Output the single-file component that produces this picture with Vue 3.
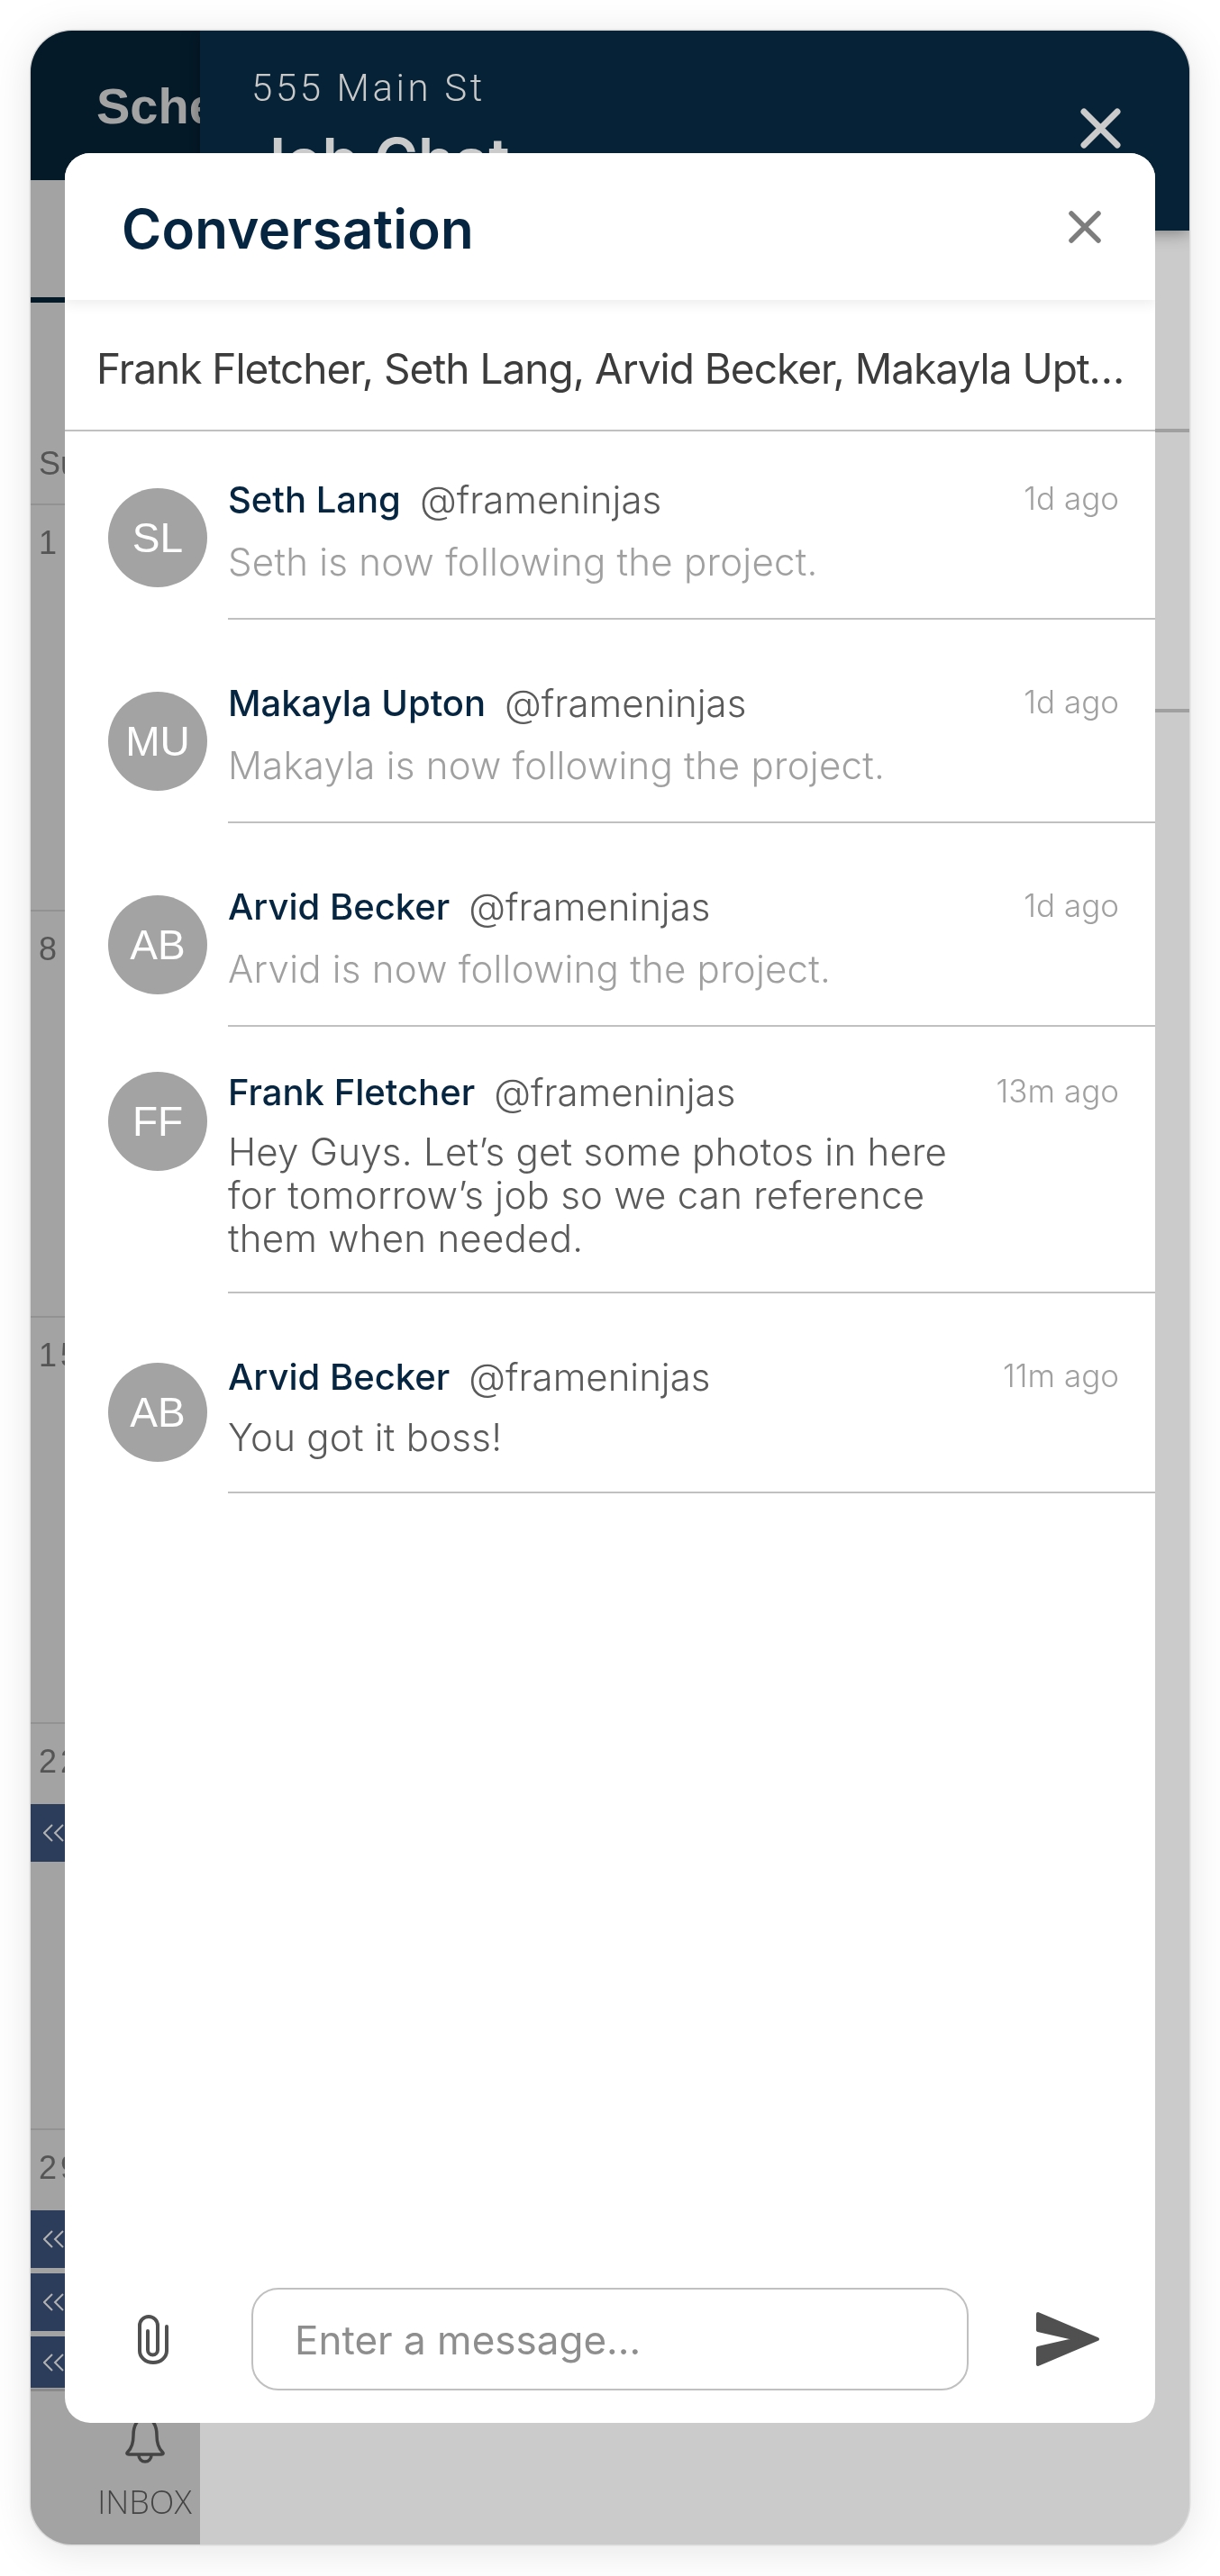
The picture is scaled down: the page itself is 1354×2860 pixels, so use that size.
<template>
  <div class="stage">
    <div class="frame">
      <aside class="sidebar">
        <div class="side-head">Schedule</div>
        <div class="side-tabs"></div>
        <div class="weekday">Su</div>
        <div v-for="day in days" :key="day.label" class="week" :class="{ lastWeek: day.chips === 3 }">
          <div class="day">{{ day.label }}</div>
          <div v-for="n in day.chips" :key="n" class="chip">
            <svg class="chev" viewBox="0 0 24 20" fill="none" stroke="#b2b2b2" stroke-width="2">
              <polyline points="10,1 1,10 10,19" />
              <polyline points="22,1 13,10 22,19" />
            </svg>
          </div>
        </div>
        <div class="side-foot">
          <svg class="bell" viewBox="0 0 44 56" fill="none" stroke="#444" stroke-width="3.5" stroke-linejoin="round">
            <path d="M22 3C12 6 9 15 9 24C9 33 7 38 3 42C1 44 2 45 4 45H40C42 45 43 44 41 42C37 38 35 33 35 24C35 15 32 6 22 3Z" />
            <path d="M15 46a7 7 0 0 0 14 0" />
          </svg>
          <span class="inbox">INBOX</span>
        </div>
      </aside>

      <section class="main">
        <header class="main-head">
          <div class="job">
            <div class="address">555 Main St</div>
            <div class="job-title">Job Chat</div>
          </div>
          <svg class="head-close" viewBox="0 0 45 45" fill="none" stroke="#cbcbcb" stroke-width="7" stroke-linecap="round">
            <path d="M4 4L41 41M41 4L4 41" />
          </svg>
        </header>
        <div class="main-row first"></div>
        <div class="main-row"></div>
      </section>

      <div class="modal">
        <div class="modal-head">
          <h1 class="modal-title">Conversation</h1>
          <svg class="modal-close" viewBox="0 0 36 36" fill="none" stroke="#7d7d7d" stroke-width="5.5" stroke-linecap="round">
            <path d="M3 3L33 33M33 3L3 33" />
          </svg>
        </div>
        <div class="recipients">
          <div class="recipients-text">Frank Fletcher, Seth Lang, Arvid Becker, Makayla Upton</div>
        </div>

        <div class="list">
          <div v-for="msg in messages" :key="msg.id" class="row" :class="msg.kind">
            <div class="avatar">{{ msg.initials }}</div>
            <div class="body">
              <div class="meta">
                <span class="name">{{ msg.name }}</span>
                <span class="handle">@frameninjas</span>
                <span class="time">{{ msg.time }}</span>
              </div>
              <div class="text" :class="{ system: msg.system }">{{ msg.text }}</div>
            </div>
          </div>
        </div>

        <div class="composer">
          <svg class="clip" viewBox="0 0 34 56" fill="none" stroke="#505050" stroke-width="4" stroke-linecap="round">
            <path d="M11 19V40a5.5 5.5 0 0 0 11 0V13a10 10 0 0 0-20 0V41a15 13 0 0 0 30 0V14" />
          </svg>
          <div class="input">Enter a message...</div>
          <svg class="send" viewBox="0 0 71 62" fill="#505050" stroke="#505050" stroke-width="4" stroke-linejoin="round">
            <path d="M2 3L68 31L2 59V41L46 31L2 21Z" />
          </svg>
        </div>
      </div>
    </div>
  </div>
</template>

<script setup>
const days = [
  { label: "1", chips: 0 },
  { label: "8", chips: 0 },
  { label: "15", chips: 0 },
  { label: "22", chips: 1 },
  { label: "29", chips: 3 },
];

const messages = [
  {
    id: 1,
    kind: "rowFirst",
    initials: "SL",
    name: "Seth Lang",
    time: "1d ago",
    text: "Seth is now following the project.",
    system: true,
  },
  {
    id: 2,
    kind: "rowPlain",
    initials: "MU",
    name: "Makayla Upton",
    time: "1d ago",
    text: "Makayla is now following the project.",
    system: true,
  },
  {
    id: 3,
    kind: "rowPlain",
    initials: "AB",
    name: "Arvid Becker",
    time: "1d ago",
    text: "Arvid is now following the project.",
    system: true,
  },
  {
    id: 4,
    kind: "rowLong",
    initials: "FF",
    name: "Frank Fletcher",
    time: "13m ago",
    text: "Hey Guys. Let’s get some photos in here\nfor tomorrow’s job so we can reference\nthem when needed.",
    system: false,
  },
  {
    id: 5,
    kind: "rowLast",
    initials: "AB",
    name: "Arvid Becker",
    time: "11m ago",
    text: "You got it boss!",
    system: false,
  },
];
</script>

<style>
html,
body {
  margin: 0;
  background: #fff;
}
</style>

<style scoped>
.stage {
  padding: 34px 34px 35px;
  font-family: Inter, "Liberation Sans", sans-serif;
  filter: drop-shadow(0 6px 22px rgba(0, 0, 0, 0.1));
}
.frame {
  position: relative;
  display: flex;
  height: 2791px;
  border-radius: 46px;
  overflow: hidden;
  background: #cbcbcb;
  box-shadow: 0 0 0 1.5px #dcdcdc;
}

/* sidebar behind the modal */
.sidebar {
  width: 188px;
  flex-shrink: 0;
  display: flex;
  flex-direction: column;
  background: #a3a3a3;
  color: #555;
  font-family: "Liberation Sans", sans-serif;
}
.side-head {
  height: 166px;
  flex-shrink: 0;
  padding-left: 73px;
  background: #041a29;
  color: #a3a3a3;
  font-size: 56px;
  font-weight: 700;
  line-height: 168px;
  white-space: nowrap;
}
.side-tabs {
  height: 130px;
  flex-shrink: 0;
  border-bottom: 6px solid #041a29;
}
.weekday {
  height: 225px;
  flex-shrink: 0;
  box-sizing: border-box;
  padding: 160px 0 0 9px;
  border-bottom: 2px solid #929292;
  font-size: 36px;
  line-height: 38px;
}
.week {
  height: 451px;
  flex-shrink: 0;
  box-sizing: border-box;
  padding: 24px 0 0 9px;
  border-bottom: 2px solid #929292;
}
.week.lastWeek {
  height: 290px;
  border-bottom: 3px solid #8a8a8a;
}
.day {
  font-size: 36px;
  line-height: 36px;
  letter-spacing: 4px;
  margin-bottom: 29px;
}
.chip {
  display: flex;
  align-items: center;
  height: 64px;
  margin: 0 0 6px -9px;
  padding-left: 14px;
  background: #2c3d5b;
}
.week.lastWeek .chip:last-child {
  height: 57px;
  margin-bottom: 0;
}
.chev {
  width: 24px;
  height: 20px;
}
.side-foot {
  flex: 1;
  display: flex;
  flex-direction: column;
  align-items: center;
  padding-left: 65px;
}
.bell {
  width: 44px;
  height: 56px;
  margin-top: 25px;
}
.inbox {
  margin-top: 24px;
  font-family: "Open Sans", sans-serif;
  font-size: 36px;
  font-weight: 300;
  line-height: 36px;
  color: #444;
}

/* job panel */
.main {
  flex: 1;
  position: relative;
}
.main-head {
  position: relative;
  display: flex;
  justify-content: space-between;
  height: 222px;
  box-sizing: border-box;
  padding: 42px 76px 0 57px;
  background: #062237;
  box-shadow: 0 2px 18px rgba(0, 0, 0, 0.4);
}
.address {
  font-family: Roboto, sans-serif;
  font-size: 42px;
  font-weight: 300;
  line-height: 44px;
  letter-spacing: 3.6px;
  color: #c8c8c8;
}
.job-title {
  margin-top: 24px;
  font-size: 66px;
  font-weight: 600;
  line-height: 66px;
  color: #cbcbcb;
}
.head-close {
  width: 45px;
  height: 45px;
  margin-top: 44px;
}
.main-row {
  height: 307px;
  border-bottom: 4px solid #a0a0a0;
}
.main-row.first {
  height: 220px;
}

/* conversation modal */
.modal {
  position: absolute;
  top: 136px;
  left: 38px;
  width: 1210px;
  height: 2520px;
  display: flex;
  flex-direction: column;
  border-radius: 28px;
  background: #fff;
  overflow: hidden;
}
.modal-head {
  position: relative;
  display: flex;
  align-items: center;
  justify-content: space-between;
  flex-shrink: 0;
  height: 163px;
  padding: 0 60px 0 63px;
  box-sizing: border-box;
  background: #fff;
  box-shadow: 0 4px 14px rgba(0, 0, 0, 0.08);
}
.modal-title {
  margin: 4px 0 0;
  font-size: 60px;
  font-weight: 600;
  color: #062540;
  letter-spacing: 0.3px;
}
.modal-close {
  width: 36px;
  height: 36px;
}
.recipients {
  flex-shrink: 0;
  height: 144px;
  display: flex;
  align-items: center;
  padding: 0 24px 0 35px;
  border-bottom: 2px solid #c0c0c0;
}
.recipients-text {
  flex: 1;
  min-width: 0;
  padding-top: 8px;
  font-size: 46px;
  letter-spacing: -1px;
  color: #3c3c3c;
  white-space: nowrap;
  overflow: hidden;
  text-overflow: ellipsis;
}
.list {
  flex: 1;
  min-height: 0;
}
.row {
  display: flex;
  padding-left: 48px;
}
.avatar {
  flex-shrink: 0;
  display: flex;
  align-items: center;
  justify-content: center;
  width: 110px;
  height: 110px;
  border-radius: 50%;
  background: #a3a3a3;
  color: #fff;
  font-family: "Liberation Sans", sans-serif;
  font-size: 46px;
}
.body {
  flex: 1;
  margin-left: 23px;
  padding-right: 40px;
  border-bottom: 2px solid #c0c0c0;
}
.meta {
  display: flex;
  align-items: flex-start;
}
.name {
  font-size: 40px;
  font-weight: 500;
  line-height: 48px;
  color: #062540;
}
.handle {
  margin-left: 21px;
  font-size: 42px;
  font-weight: 300;
  line-height: 48px;
  color: #5a5a5a;
}
.time {
  margin-left: auto;
  font-size: 35px;
  font-weight: 300;
  line-height: 44px;
  color: #a0a0a0;
}
.text {
  position: relative;
  top: 1px;
  font-size: 42px;
  font-weight: 300;
  line-height: 48px;
  letter-spacing: 0.25px;
  color: #5a5a5a;
  white-space: pre-line;
}
.text.system {
  color: #a0a0a0;
}
.rowFirst .avatar {
  margin-top: 63px;
}
.rowFirst .body {
  padding-top: 52px;
  padding-bottom: 39px;
}
.rowFirst .text,
.rowPlain .text {
  margin-top: 20px;
}
.rowPlain .avatar {
  margin-top: 80px;
}
.rowPlain .body {
  padding-top: 69px;
  padding-bottom: 39px;
}
.rowLong .avatar {
  margin-top: 50px;
}
.rowLong .body {
  padding-top: 49px;
  padding-bottom: 36px;
}
.rowLong .text {
  margin-top: 17px;
}
.rowLast .avatar {
  margin-top: 77px;
}
.rowLast .body {
  padding-top: 69px;
  padding-bottom: 37px;
}
.rowLast .text {
  margin-top: 18px;
}
.composer {
  flex-shrink: 0;
  display: flex;
  align-items: center;
  padding: 0 61px 36px 81px;
}
.clip {
  width: 34px;
  height: 56px;
  flex-shrink: 0;
}
.input {
  box-sizing: border-box;
  width: 796px;
  height: 114px;
  margin: 0 75px 0 92px;
  padding-left: 46px;
  border: 2px solid #c0c0c0;
  border-radius: 30px;
  font-size: 44px;
  line-height: 113px;
  color: #8e8e8e;
}
.send {
  width: 71px;
  height: 62px;
  flex-shrink: 0;
}
</style>
